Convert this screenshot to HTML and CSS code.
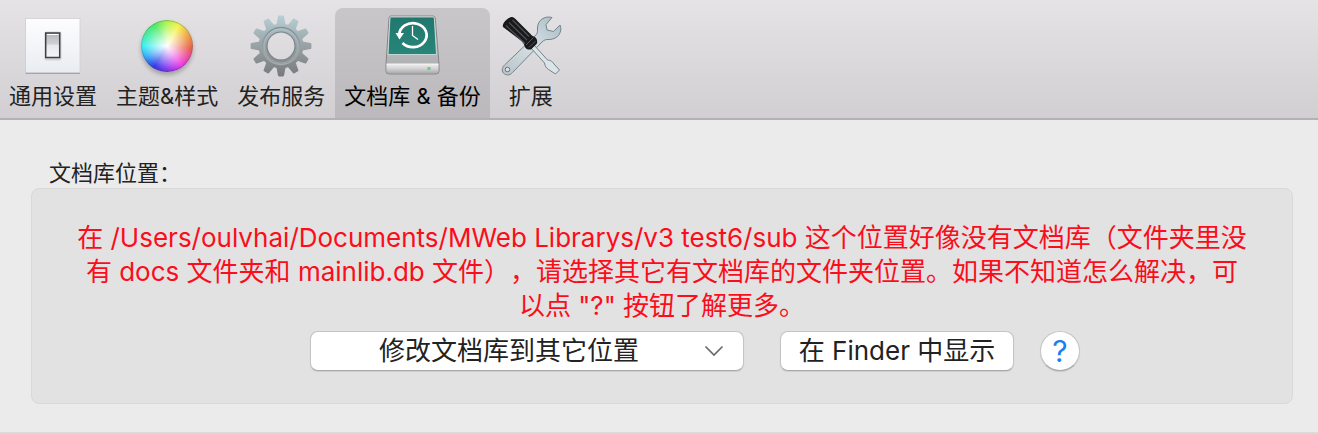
FILE: index.html
```
<!DOCTYPE html>
<html lang="zh-CN">
<head>
<meta charset="utf-8">
<meta name="viewport" content="width=device-width, initial-scale=1">
<title>文档库 &amp; 备份</title>
<link rel="stylesheet" href="styles.css">
</head>
<body>
<nav class="toolbar">
  <button class="tab" type="button">
    <svg class="icon" viewBox="0 0 62 62" aria-hidden="true">
      <defs>
        <linearGradient id="plate" x1="0" y1="0" x2="0" y2="1"><stop offset="0" stop-color="#fdfdfe"/><stop offset="1" stop-color="#e9edf1"/></linearGradient>
        <linearGradient id="rocker" x1="0" y1="0" x2="0" y2="1"><stop offset="0" stop-color="#b4b6b9"/><stop offset=".45" stop-color="#cfd1d3"/><stop offset=".5" stop-color="#e6e9eb"/><stop offset="1" stop-color="#f4f6f7"/></linearGradient>
      </defs>
      <rect x="3.500" y="4.500" width="54.500" height="54.500" fill="#a5a6aa"/>
      <rect x="3.500" y="3.500" width="54.500" height="54" fill="url(#plate)" stroke="#cfd0d4" stroke-width=".8"/>
      <rect x="22.500" y="16.500" width="17" height="29" rx="2" fill="#b5b9be" opacity=".5"/>
      <rect x="23.700" y="18" width="14" height="24.500" fill="url(#rocker)" stroke="#3f4145" stroke-width="1.500"/>
      <path d="M25 19.500h11.500" stroke="#fff"/>
    </svg>
    <span class="tab-label">通用设置</span>
  </button>
  <button class="tab" type="button">
    <span class="icon wheel-box" aria-hidden="true"><span class="wheel"></span></span>
    <span class="tab-label">主题&amp;样式</span>
  </button>
  <button class="tab" type="button">
    <svg class="icon" viewBox="-31 -31 62 62" aria-hidden="true">
      <defs>
        <linearGradient id="steel" x1="0" y1="0" x2="0" y2="1"><stop offset="0" stop-color="#b9d0d7"/><stop offset=".45" stop-color="#9ba6aa"/><stop offset="1" stop-color="#77797a"/></linearGradient>
        <linearGradient id="ring" x1="0" y1="0" x2="0" y2="1"><stop offset="0" stop-color="#7e949b"/><stop offset="1" stop-color="#a9abac"/></linearGradient>
        <path id="tooth" d="M-4.800-20 L-3-29.600 Q-2.800-30.400-2-30.400 H2 Q2.800-30.400 3-29.600 L4.800-20Z"/>
        <g id="teeth"><use href="#tooth"/><use href="#tooth" transform="rotate(30)"/><use href="#tooth" transform="rotate(60)"/><use href="#tooth" transform="rotate(90)"/><use href="#tooth" transform="rotate(120)"/><use href="#tooth" transform="rotate(150)"/><use href="#tooth" transform="rotate(180)"/><use href="#tooth" transform="rotate(210)"/><use href="#tooth" transform="rotate(240)"/><use href="#tooth" transform="rotate(270)"/><use href="#tooth" transform="rotate(300)"/><use href="#tooth" transform="rotate(330)"/></g>
        <mask id="gear" maskUnits="userSpaceOnUse" x="-31" y="-31" width="62" height="62"><g fill="#fff"><circle r="22.500"/><use href="#teeth"/></g><circle r="13.300" fill="#000"/></mask>
      </defs>
      <g mask="url(#gear)">
        <rect x="-31" y="-31" width="62" height="62" fill="url(#steel)"/>
        <circle r="18.500" fill="none" stroke="url(#ring)" stroke-width="1.500"/>
        <circle r="17" fill="none" stroke="#bfc8cb" stroke-width="1" opacity=".5"/>
        <circle r="14" fill="none" stroke="#7b8589" stroke-width="1.200"/>
      </g>
    </svg>
    <span class="tab-label">发布服务</span>
  </button>
  <button class="tab tab-selected" type="button" aria-current="page">
    <svg class="icon" viewBox="0 0 62 62" aria-hidden="true">
      <defs>
        <linearGradient id="case" x1="0" y1="0" x2="0" y2="1"><stop offset="0" stop-color="#cfd1d2"/><stop offset="1" stop-color="#a9a9ac"/></linearGradient>
        <linearGradient id="front" x1="0" y1="0" x2="0" y2="1"><stop offset="0" stop-color="#efefef"/><stop offset=".5" stop-color="#d2d2d3"/><stop offset="1" stop-color="#a8a8aa"/></linearGradient>
        <linearGradient id="green" x1="0" y1="0" x2="0" y2="1"><stop offset="0" stop-color="#21776d"/><stop offset="1" stop-color="#27857a"/></linearGradient>
      </defs>
      <path d="M10 1h42q2 0 2.200 2L58 49v7q0 3-3 3H8q-3 0-3-3v-7L8 3q.200-2 2-2Z" fill="url(#case)" stroke="#858588"/>
      <path d="M10 2h42q1.200 0 1.300 1.200L55.500 39.500H7L9 3q0-1 1-1Z" fill="url(#green)" stroke="#d8e4e2" stroke-width=".8"/>
      <path d="M5.500 49h52v7q0 2.500-2.500 2.500H8q-2.500 0-2.500-2.500Z" fill="url(#front)"/>
      <path d="M5.500 49h52" stroke="#f4f4f4"/>
      <path d="M18.200 20A13.700 12 0 1 1 21.500 28" fill="none" stroke="#fff" stroke-width="2.700"/>
      <path d="M14.500 18h8.500l-4.500 6.500Z" fill="#fff"/>
      <path d="M31.500 11v9.500l5.500 4" fill="none" stroke="#fff" stroke-width="1.300"/>
      <rect x="46.500" y="52" width="3" height="3" fill="#70c982"/>
    </svg>
    <span class="tab-label">文档库 &amp; 备份</span>
  </button>
  <button class="tab" type="button">
    <svg class="icon" viewBox="0 0 62 62" aria-hidden="true">
      <defs>
        <linearGradient id="wrench" x1="0" y1="1" x2="1" y2="0"><stop offset="0" stop-color="#b8c3c9"/><stop offset=".5" stop-color="#d5e0e5"/><stop offset="1" stop-color="#a9bbc3"/></linearGradient>
      </defs>
      <path d="M52 2.500C45 .5 37.500 5 37.500 13c0 3 .2 5-1.500 7L4.500 50C1.500 53 1.500 57 4.500 59c3 1.800 6 .8 8-1.500L42 27c2.500-2.500 4-2.500 7-2.500C58 24.500 63 16.500 60 10l-6.500 6.500-6.500-1.500-1-5.500Z" fill="url(#wrench)" stroke="#74848c"/>
      <circle cx="7.500" cy="54.500" r="2.300" fill="#dedde0" stroke="#66747b"/>
      <path d="m31 33 3-3L47.500 45c3 .2 5 1.500 6.500 4l5.500 6-4 4-7-4.500c-2.500-1.500-3.500-3.500-4-6.500Z" fill="#dbe4e8" stroke="#75838a"/>
      <path d="M3 12C1.500 8.500 8 2 12 2c1.500 0 2.500 1 3.500 2L29.500 18c1.500 1.500 2.500 3 4.500 3.500 3 1.500 3.500 4 3 7l-6 6c-3 .5-5.500-.500-6.500-3.500-.500-2-1.500-3.500-3-5Z" fill="#19191b"/>
      <path d="m6 10.500 19 18M9 7.500 27 25M12.500 5 29 21.500" stroke="#505255" stroke-width="1.100"/>
      <path d="m26 30 7.500-7.500M29 32.500l6.500-6.500" stroke="#55575a"/>
    </svg>
    <span class="tab-label">扩展</span>
  </button>
</nav>
<main class="content">
  <h1 class="group-title" id="group-title">文档库位置：</h1>
  <section class="group" aria-labelledby="group-title">
    <p class="warning">在 /Users/oulvhai/Documents/MWeb Librarys/v3 test6/sub 这个位置好像没有文档库（文件夹里没<br>有 docs 文件夹和 mainlib.db 文件），请选择其它有文档库的文件夹位置。如果不知道怎么解决，可<br>以点 "?" 按钮了解更多。</p>
    <div class="actions">
      <div class="popup">
        <select class="control popup-select" aria-label="文档库位置">
          <option>修改文档库到其它位置</option>
        </select>
        <svg class="chevron" viewBox="0 0 20 12" aria-hidden="true"><path d="m1.500 1.500 8.500 8.500 8.500-8.500" fill="none" stroke="#6a6a6a" stroke-width="1.700"/></svg>
      </div>
      <button class="control reveal" type="button">在 Finder 中显示</button>
      <button class="help" type="button" aria-label="帮助">?</button>
    </div>
  </section>
</main>
</body>
</html>
```
FILE: styles.css
```
* {
  box-sizing: border-box;
}

body {
  margin: 0;
  min-height: 100vh;
  display: flex;
  flex-direction: column;
  background: #ebebeb;
  border-bottom: 2px solid #dadada;
  color: #222;
  font-family: Inter, "Noto Sans CJK SC", sans-serif;
}

button,
select {
  font: inherit;
  color: inherit;
}

.toolbar {
  display: flex;
  gap: 1px;
  padding-top: 8px;
  background: linear-gradient(#e5e3e5, #d1cfd1);
  border-bottom: 2px solid #b3b1b3;
}

.tab {
  display: flex;
  flex-direction: column;
  align-items: center;
  gap: 3px;
  padding: 7px 9px 6px;
  border: 0;
  border-radius: 8px 8px 0 0;
  background: none;
}

.tab-selected {
  background: linear-gradient(#c8c6c8, #bbb9bb);
  color: #000;
}

.icon {
  width: 62px;
  height: 62px;
}

.tab-label {
  font-size: 22px;
  line-height: 32px;
  white-space: nowrap;
}

.wheel-box {
  display: grid;
  place-items: center;
}

.wheel {
  width: 52px;
  height: 52px;
  border-radius: 50%;
  background:
    radial-gradient(circle, #fff 0, #ffffffa0 24%, #ffffff00 62%),
    conic-gradient(#b4f455, #f7f34e 30deg, #f0a04a 65deg, #e8664e 95deg, #f04fa8 120deg, #ee45e8 145deg, #8a3cf0 180deg, #3440e8 212deg, #3cb4f8 245deg, #45f0f4 270deg, #48eea0 300deg, #52ec6c 330deg, #b4f455);
  box-shadow: inset 0 -1px 2px #2a208090, inset 0 1px 1px #4a8a4a80, 0 3px 4px #00000040;
}

.content {
  flex: 1;
  padding: 38px 25px 28px 31px;
}

.group-title {
  margin: 0;
  padding-left: 18px;
  font-size: 22px;
  font-weight: 400;
  line-height: 30px;
}

.group {
  padding: 32px 24px;
  border: 1px solid #d9d9d9;
  border-radius: 8px;
  background: #e2e2e2;
}

.warning {
  margin: 0;
  color: #fb0d1b;
  font-size: 26px;
  line-height: 34px;
  text-align: center;
  text-spacing-trim: space-all;
}

.actions {
  display: flex;
  justify-content: center;
  align-items: center;
  padding-top: 8px;
  padding-left: 66px;
}

.control {
  height: 40px;
  border: 1px solid #c4c4c4;
  border-bottom-color: #a8a8a8;
  border-radius: 8px;
  background: #fff;
  box-shadow: 0 1px 1px #00000018;
  font-size: 26px;
  line-height: 34px;
}

.popup {
  display: grid;
  align-items: center;
  width: 434px;
  margin-right: 36px;
}

.popup-select {
  grid-area: 1 / 1;
  width: 100%;
  padding: 0 36px 0 0;
  appearance: none;
  text-align: center;
  text-align-last: center;
}

.chevron {
  grid-area: 1 / 1;
  justify-self: end;
  width: 20px;
  height: 12px;
  margin-right: 20px;
  pointer-events: none;
}

.reveal {
  width: 234px;
  margin-right: 26px;
  padding: 0;
  white-space: nowrap;
}

.help {
  width: 40px;
  height: 40px;
  padding: 0;
  border: 1px solid #c6c6c6;
  border-bottom-color: #a8a8a8;
  border-radius: 50%;
  background: #fff;
  box-shadow: 0 1px 1px #00000020;
  color: #1a7fee;
  font-size: 30px;
  line-height: 36px;
}
```
